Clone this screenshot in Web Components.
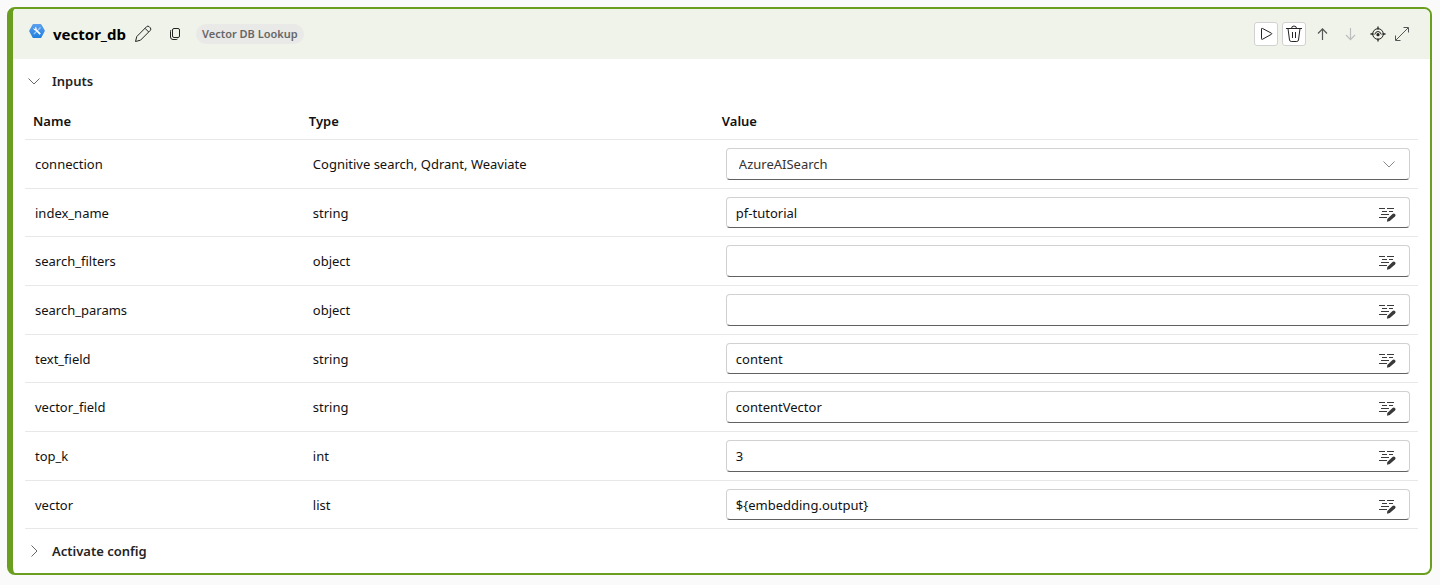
<!DOCTYPE html>
<html lang="en">
<head>
<meta charset="utf-8">
<title>vector_db</title>
<style>
body{margin:0;padding:7px 8px 10px 7px;background:#fafafa;font:14px/20px "Noto Sans","Open Sans",sans-serif;color:#111}
</style>
</head>
<body>
<node-card>
  <node-toolbar slot="header" name="vector_db" kind="Vector DB Lookup"></node-toolbar>
  <node-section label="Inputs" open><inputs-table></inputs-table></node-section>
  <node-section label="Activate config"></node-section>
</node-card>
<script>
const icons = {
  tool:['0 0 16 16',16,'<defs><linearGradient id="g" x1="0" y1="0" x2="0" y2="1"><stop offset="0" stop-color="#5ea0ef"/><stop offset="1" stop-color="#1f7fde"/></linearGradient></defs><path fill="url(#g)" stroke="none" d="M4.400 1h7.200q.5 0 .8.500L15.700 7.300q.3.500 0 1l-3.300 6.200q-.3.500-.8.500H4.400q-.5 0-.8-.5L.3 8.500q-.3-.5 0-1l3.300-6Q3.900 1 4.400 1z"/><path d="M11.500 4.500L4.800 11.200" stroke="#a5cff8" stroke-width="1.200"/><path d="M6.500 6.500l4.700 4.700" stroke="#fff" stroke-width="1.700"/><path d="M4.300 5a1.900 1.900 0 0 0 3 1.800A1.900 1.900 0 0 0 6 3.800l.6 1.400-1 .8z" fill="#fff" stroke="none"/>'],
  pencil:['0 0 18 18',18,'<path d="M1.500 16.500l1.300-5L12.600 1.700q1.300-1.200 2.600 0l1.100 1.100q1.200 1.300 0 2.600L6.500 15.200zM11 3.300l3.700 3.700"/>'],
  copy:['0 0 14 14',14,'<rect x="4.500" y="1.500" width="7" height="9" rx="1.500"/><path d="M3 3q-.5.500-.5 1.500v5.500q0 2.500 2.500 2.500h3q1 0 1.500-.5"/>'],
  play:['0 0 16 16',16,'<path d="M3.500 3q0-1 .9-.6l9 4.800q.9.600 0 1.100l-9 5q-.9.400-.9-.6z"/>'],
  trash:['0 0 18 18',18,'<path d="M1 3.500h16M6.500 3.500q0-2.500 2.500-2.500t2.500 2.500M3 3.500l1.500 11.500q.3 1.500 1.800 1.500h5.400q1.500 0 1.800-1.500L15 3.500M7.500 7v6M10.500 7v6"/>'],
  up:['0 0 16 16',16,'<path d="M8.500 14V3M4 7.500l4.500-4.700L13 7.500" stroke-width="1.200"/>'],
  down:['0 0 16 16',16,'<path d="M8.500 2v11.500M4 9l4.500 4.700L13 9" stroke-width="1.200"/>'],
  target:['0 0 16 16',16,'<circle cx="8" cy="8" r="5.300"/><path d="M8 .5v3M8 12.500v3M.5 8h3M12.500 8h3" stroke-width="1.300"/><circle cx="8" cy="8.700" r="1.600" fill="currentColor" stroke="none"/><path d="M4.700 8.500Q5.500 5.500 8 5.500t3.300 3"/>'],
  expand:['0 0 16 16',16,'<path d="M2 14L14 2M9.500 1.500h5v5M1.500 9.500v5h5"/>'],
  chevronDown:['0 0 14 14',14,'<path d="M1.500 4.500L7 10l5.500-5.500"/>'],
  chevronRight:['0 0 14 14',14,'<path d="M4.500 1.500L10 7l-5.500 5.500"/>'],
  edit:['0 0 18 16',18,'<path d="M1 2.500h6M9 2.500h7M4 5.500h5M11 5.500h4M3 8.500h8M1 11.500h8"/><path d="M9 15.700l.3-2.800 5.200-5q1.200-1 2.500 0 1.100 1.300 0 2.500l-5.200 4.600z" fill="currentColor" stroke="none"/>']
};
const icon = n => { const [v,w,p]=icons[n]; return `<svg aria-hidden="true" viewBox="${v}" width="${w}" height="${v.split(' ')[3]}" fill="none" stroke="currentColor">${p}</svg>`; };
const base = '*{box-sizing:border-box}svg{display:block;flex:none}button{font:inherit;color:inherit;background:none;border:0;padding:0;margin:0;display:flex;align-items:center;justify-content:center;cursor:pointer}';

class NodeCard extends HTMLElement{
  connectedCallback(){
    this.attachShadow({mode:'open'}).innerHTML=`<style>${base}
:host{display:block;box-sizing:border-box;border:2px solid #6a9e1f;border-left-width:6px;border-radius:8px;background:#fff;overflow:hidden}</style><slot name="header"></slot><slot></slot>`;
  }
}
class NodeToolbar extends HTMLElement{
  connectedCallback(){
    this.attachShadow({mode:'open'}).innerHTML=`<style>${base}
:host{display:flex;align-items:center;height:50px;box-sizing:border-box;padding:0 20px 0 16px;background:#f0f3e9;color:#242424}
.tool{margin:0 8px 6px 0}
h2{margin:0 8px 0 0;font-size:15px;line-height:24px;font-weight:700;color:#000}
.copy{margin:0 14px 0 16px}
.tag{padding:0 6px;border-radius:10px;background:#e9e9e8;color:#666;font-size:11px;line-height:20px;font-weight:600}
.actions{display:flex;align-items:center;gap:4px;margin-left:auto}
.actions button{width:24px;height:24px}
.actions .box{background:#fff;border:1px solid #d1d1d1;border-radius:3px}
.actions button:disabled{color:#bdbdbd}
.soft{color:#555}
.actions .narrow{width:16px}
</style><span class="tool">${icon('tool')}</span><h2>${this.getAttribute('name')}</h2>
<button aria-label="Rename">${icon('pencil')}</button><button class="copy" aria-label="Copy">${icon('copy')}</button>
<span class="tag">${this.getAttribute('kind')}</span>
<div class="actions"><button class="box" aria-label="Run">${icon('play')}</button><button class="box" aria-label="Delete">${icon('trash')}</button><button class="soft" aria-label="Move up">${icon('up')}</button><button disabled aria-label="Move down">${icon('down')}</button><button aria-label="Locate">${icon('target')}</button><button class="soft narrow" aria-label="Expand">${icon('expand')}</button></div>`;
  }
}
class NodeSection extends HTMLElement{
  connectedCallback(){
    const open=this.hasAttribute('open');
    const root=this.attachShadow({mode:'open'});
    root.innerHTML=`<style>${base}
:host{display:block;padding:0 12px}
h3{margin:0;font:inherit}
.toggle{height:44px;gap:11px;padding-left:2px;font-size:13px;font-weight:600;color:#242424}
.mark{color:#666}
</style><h3><button class="toggle" aria-expanded="${open}"><span class="mark">${icon(open?'chevronDown':'chevronRight')}</span>${this.getAttribute('label')}</button></h3><div ${open?'':'hidden'}><slot></slot></div>`;
    const button=root.querySelector('button'), panel=root.querySelector('div');
    button.onclick=()=>{
      panel.hidden=!panel.hidden;
      button.setAttribute('aria-expanded',!panel.hidden);
      root.querySelector('.mark').innerHTML=icon(panel.hidden?'chevronRight':'chevronDown');
    };
  }
}
class ValueField extends HTMLElement{
  connectedCallback(){
    const select=this.getAttribute('type')==='select', v=this.getAttribute('value'), label=this.getAttribute('label');
    this.attachShadow({mode:'open'}).innerHTML=`<style>${base}
:host{display:grid;grid-template-columns:1fr auto;align-items:center;box-sizing:border-box;border:1px solid #d1d1d1;border-bottom-color:#616161;border-radius:4px;background:#fff;overflow:hidden}
input,select{grid-area:1/1/2/3;width:100%;height:100%;min-width:0;border:0;outline:0;background:none;appearance:none;font:inherit;color:inherit;padding:0 40px 0 9px}
select{padding-left:12px;color:#333}
.end{grid-area:1/2;margin-right:13px;color:#3a3a3a}
button.end{padding-top:2px}
span.end{pointer-events:none;color:#888}
</style>${select?`<select aria-label="${label}"><option>${v}</option></select><span class="end">${icon('chevronDown')}</span>`:`<input aria-label="${label}" value="${v}"><button class="end" aria-label="Edit ${label}">${icon('edit')}</button>`}`;
  }
}
const inputs=[
  ['connection','Cognitive search, Qdrant, Weaviate','AzureAISearch','select'],
  ['index_name','string','pf-tutorial'],
  ['search_filters','object',''],
  ['search_params','object',''],
  ['text_field','string','content'],
  ['vector_field','string','contentVector'],
  ['top_k','int','3'],
  ['vector','list','${embedding.output}']
];
class InputsTable extends HTMLElement{
  connectedCallback(){
    this.attachShadow({mode:'open'}).innerHTML=`<style>${base}
:host{display:block}
table{width:100%;table-layout:fixed;border-spacing:0;font-size:13px}
th,td{text-align:left;padding:8px 8px 8px 12px;border-bottom:1px solid #e8e8e8}
th{height:37px;padding:0 8px;font-weight:600;color:#111}
td:first-child{padding-left:10px}
.name{width:19.8%}.type{width:29.65%}
value-field{height:32px}
tr:nth-child(3n+2) value-field{height:31px}
</style><table><thead><tr><th class="name">Name</th><th class="type">Type</th><th>Value</th></tr></thead><tbody>${inputs.map(([n,t,v,k])=>`<tr><td>${n}</td><td>${t}</td><td><value-field type="${k||'text'}" label="${n}" value="${v}"></value-field></td></tr>`).join('')}</tbody></table>`;
  }
}
customElements.define('value-field',ValueField);
customElements.define('inputs-table',InputsTable);
customElements.define('node-section',NodeSection);
customElements.define('node-toolbar',NodeToolbar);
customElements.define('node-card',NodeCard);
</script>
</body>
</html>
